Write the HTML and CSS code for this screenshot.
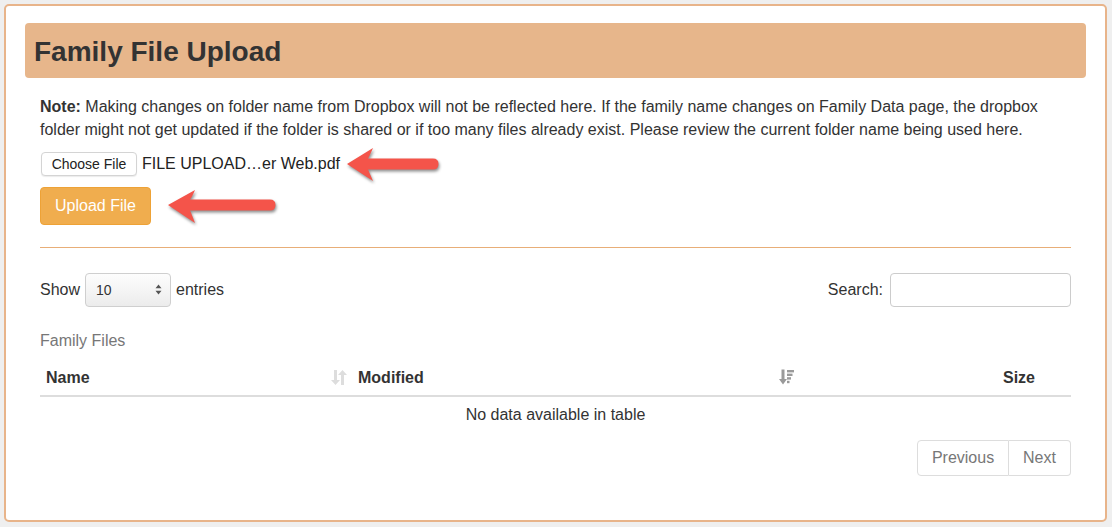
FILE: index.html
```html
<!DOCTYPE html>
<html>
<head>
<meta charset="utf-8">
<link rel="stylesheet" href="styles.css">
</head>
<body>
<div class="card">
  <div class="header"><h1 class="title">Family File Upload</h1></div>
  <div class="body">
    <p class="note"><b>Note:</b> Making changes on folder name from Dropbox will not be reflected here. If the family name changes on Family Data page, the dropbox folder might not get updated if the folder is shared or if too many files already exist. Please review the current folder name being used here.</p>
    <div class="file-row">
      <span class="choose">Choose File</span>
      <span class="filename">FILE UPLOAD…er Web.pdf</span>
    </div>
    <div class="upload-row">
      <span class="btn-upload">Upload File</span>
    </div>
    <div class="rule"></div>
    <div class="controls">
      <div class="length">
        <span>Show</span>
        <span class="select"><span class="sel-val">10</span>
          <svg class="sel-arrows" width="7" height="11" viewBox="0 0 7 11"><path d="M3.5 0.5 L6.5 4.2 H0.5 Z M3.5 10.5 L6.5 6.8 H0.5 Z" fill="#555"/></svg>
        </span>
        <span>entries</span>
      </div>
      <div class="search">
        <span>Search:</span>
        <span class="search-input"></span>
      </div>
    </div>
    <div class="caption">Family Files</div>
    <table class="tbl">
      <thead>
        <tr>
          <th class="c-name">Name
            <svg class="sort sort-both" width="16" height="17" viewBox="0 0 16 17"><path d="M3 1 H6 V11 H9 L4.5 16 L0 11 H3 Z M10 16 H13 V6 H16 L11.5 1 L7 6 H10 Z" fill="#dddddd"/></svg>
          </th>
          <th class="c-mod">Modified
            <svg class="sort sort-desc" width="15" height="16" viewBox="0 0 15 16"><path d="M2.5 0.5 H5.5 V10 H8 L4 15.5 L0 10 H2.5 Z" fill="#9a9a9a"/><rect x="8" y="1" width="7" height="2.4" fill="#9a9a9a"/><rect x="8" y="4.6" width="5.5" height="2.4" fill="#9a9a9a"/><rect x="8" y="8.2" width="4" height="2.4" fill="#9a9a9a"/><rect x="8" y="11.8" width="2.5" height="2.4" fill="#9a9a9a"/></svg>
          </th>
          <th class="c-size">Size</th>
        </tr>
      </thead>
      <tbody>
        <tr><td colspan="3" class="empty">No data available in table</td></tr>
      </tbody>
    </table>
    <div class="paging">
      <span class="pg pg-prev">Previous</span><span class="pg pg-next">Next</span>
    </div>
  </div>
  <svg class="arrow arrow-1" width="100" height="40" viewBox="0 0 100 40"><path d="M2 17 L28 1 Q25 8 23 11.5 L88 11.5 Q93.5 11.5 93.5 17 Q93.5 22.5 88 22.5 L23 22.5 Q25 27 28 34 Z" fill="#f4544a"/></svg>
  <svg class="arrow arrow-2" width="115" height="40" viewBox="0 0 115 40"><path d="M2 16 L29 1 Q26 8 24 10.5 L104 10.5 Q109.5 10.5 109.5 16 Q109.5 21.5 104 21.5 L24 21.5 Q26 26 29 34 Z" fill="#f4544a"/></svg>
</div>
</body>
</html>
```

FILE: styles.css
```css
* { box-sizing: border-box; }
html, body { margin: 0; padding: 0; }
body {
  background: #efefef;
  padding: 4px 5px 5px 4px;
  font-family: "Liberation Sans", Arial, sans-serif;
  font-size: 16px;
  color: #333;
}
.card {
  position: relative;
  background: #fff;
  border: 2px solid #e8b48a;
  border-radius: 5px;
  padding: 17px 19px 44px 19px;
  height: 518px;
}
.header {
  background: #e7b68b;
  border-radius: 4px;
  height: 55px;
  display: flex;
  align-items: center;
  padding-left: 9px;
  padding-top: 3px;
}
.title {
  margin: 0;
  font-size: 28px;
  font-weight: bold;
  color: #333;
}
.body {
  padding: 0 15px;
}
.note {
  margin: 17px 0 0 0;
  line-height: 23px;
  font-size: 16px;
}
.file-row {
  margin-top: 11px;
  height: 24px;
  display: flex;
  align-items: center;
  gap: 5px;
}
.choose {
  display: inline-flex;
  align-items: center;
  justify-content: center;
  width: 96px;
  height: 24px;
  margin-left: 1px;
  border: 1px solid #d4d4d4;
  border-radius: 4px;
  background: #fff;
  font-size: 14px;
  color: #222;
  box-shadow: 0 1px 1px rgba(0,0,0,0.08);
}
.filename {
  font-size: 16px;
  color: #222;
}
.upload-row {
  margin-top: 11px;
  display: flex;
}
.btn-upload {
  display: inline-flex;
  align-items: center;
  justify-content: center;
  width: 111px;
  height: 38px;
  background: #f0ad4e;
  border: 1px solid #eea236;
  border-radius: 4px;
  color: #fff;
  font-size: 16px;
}
.rule {
  margin-top: 22px;
  border-top: 1px solid #e8ae78;
}
.controls {
  margin-top: 24px;
  display: flex;
  justify-content: space-between;
  align-items: center;
  height: 35px;
}
.length, .search {
  display: flex;
  align-items: center;
  gap: 5px;
}
.select {
  display: inline-flex;
  align-items: center;
  justify-content: space-between;
  width: 86px;
  height: 34px;
  padding: 0 8px 0 10px;
  border: 1px solid #cfcfcf;
  border-radius: 4px;
  background: linear-gradient(#fdfdfd, #ececec);
  font-size: 14px;
  color: #333;
}
.search-input {
  display: inline-block;
  width: 181px;
  height: 34px;
  border: 1px solid #ccc;
  border-radius: 4px;
  background: #fff;
  margin-left: 2px;
}
.caption {
  margin-top: 22px;
  line-height: 23px;
  color: #777;
}
.tbl {
  width: 100%;
  border-collapse: collapse;
  margin-top: 7px;
}
.tbl th {
  position: relative;
  text-align: left;
  font-weight: bold;
  line-height: 23px;
  padding: 7px 6px 6px 6px;
  border-bottom: 2px solid #ddd;
}
.c-name { width: 312px; }
.c-mod { width: 448px; padding-left: 6px !important; }
.c-size { text-align: right !important; padding-right: 36px !important; }
.sort {
  position: absolute;
  top: 10px;
}
.sort-both { right: 5px; }
.sort-desc { right: 6px; }
.empty {
  text-align: center;
  line-height: 23px;
  padding: 6px 8px 7px 8px;
}
.paging {
  margin-top: 7px;
  display: flex;
  justify-content: flex-end;
}
.pg {
  display: inline-flex;
  align-items: center;
  justify-content: center;
  height: 36px;
  border: 1px solid #ddd;
  color: #777;
  font-size: 16px;
}
.pg-prev { width: 92px; border-radius: 4px 0 0 4px; }
.pg-next { width: 62px; border-left: none; border-radius: 0 4px 4px 0; }
.arrow {
  position: absolute;
  filter: drop-shadow(1px 2px 1.5px rgba(0,0,0,0.45));
}
.arrow-1 { left: 339px; top: 141px; }
.arrow-2 { left: 160px; top: 183px; }
```
